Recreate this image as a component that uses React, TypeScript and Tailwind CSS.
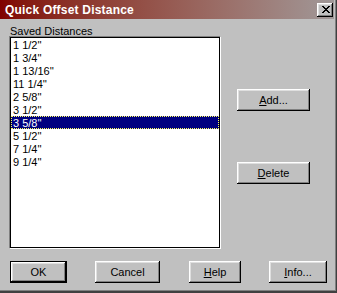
import React from "react";

const items = ["1 1/2''", "1 3/4''", "1 13/16''", "11 1/4''", "2 5/8''", "3 1/2''", "3 5/8''", "5 1/2''", "7 1/4''", "9 1/4''"];

const bevel =
  "shadow-[inset_-1px_-1px_#000000,inset_1px_1px_#ffffff,inset_-2px_-2px_#808080,inset_2px_2px_#dfdfdf]";

function Btn({ w, children, def }: { w: string; children: React.ReactNode; def?: boolean }) {
  if (def) {
    return (
      <div className={`${w} h-[22px] border border-black bg-[#c0c0c0]`}>
        <div className={`w-full h-full ${bevel} flex items-center justify-center text-[11px] leading-[13px] text-black`}>
          {children}
        </div>
      </div>
    );
  }
  return (
    <div className={`${w} h-[22px] bg-[#c0c0c0] ${bevel} flex items-center justify-center text-[11px] leading-[13px] text-black`}>
      {children}
    </div>
  );
}

function CloseGlyph() {
  const rows: [number, number][][] = [
    [[0, 2], [6, 2]],
    [[1, 2], [5, 2]],
    [[2, 4]],
    [[3, 2]],
    [[2, 4]],
    [[1, 2], [5, 2]],
    [[0, 2], [6, 2]],
  ];
  return (
    <svg width="8" height="7" viewBox="0 0 8 7" shapeRendering="crispEdges">
      {rows.map((r, y) =>
        r.map(([x, w], i) => <rect key={`${y}-${i}`} x={x} y={y} width={w} height={1} fill="#000" />)
      )}
    </svg>
  );
}

export default function App() {
  return (
    <div
      className="w-[337px] h-[293px] border-r border-b-2 border-[#404040] bg-[#c0c0c0] overflow-hidden"
      style={{ fontFamily: '"Liberation Sans", Arial, sans-serif' }}
    >
      <div className="w-full h-full shadow-[inset_-1px_-1px_#808080] flex flex-col">
        {/* Title bar */}
        <div className="h-[19px] mr-[2px] bg-gradient-to-r from-[#800000] to-[#a09898] flex items-center justify-between pl-[5px] pr-[1px]">
          <span className="text-white font-bold text-[12px] leading-[14px] tracking-[0.2px]">Quick Offset Distance</span>
          <div className={`w-[16px] h-[14px] bg-[#c0c0c0] ${bevel} flex items-center justify-center pl-[1px]`}>
            <CloseGlyph />
          </div>
        </div>

        <div className="flex flex-row">
          {/* Left column */}
          <div className="pl-[9px] flex flex-col">
            <div className="h-[17px] pt-[7px] pl-[1px] text-[11px] leading-[11px] text-black">Saved Distances</div>
            <div className="w-[212px] h-[213px] border border-t-[#808080] border-l-[#808080] border-r-white border-b-white">
              <div className="w-full h-full border border-black bg-white flex flex-col">
                {items.map((it, i) =>
                  i === 6 ? (
                    <div
                      key={i}
                      className="h-[13px] bg-[#000080] text-white border border-dotted border-[#ffff60] pl-[1px] pt-[1px] text-[11px] leading-[10px] whitespace-pre"
                    >
                      {it}
                    </div>
                  ) : (
                    <div key={i} className="h-[13px] pl-[2px] pt-[1px] text-[11px] leading-[12px] text-black whitespace-pre">
                      {it}
                    </div>
                  )
                )}
              </div>
            </div>
          </div>

          {/* Right column */}
          <div className="ml-[16px] flex flex-col">
            <div className="mt-[70px]">
              <Btn w="w-[73px]">
                <span className="underline">A</span>dd...
              </Btn>
            </div>
            <div className="mt-[51px]">
              <Btn w="w-[73px]">
                <span className="underline">D</span>elete
              </Btn>
            </div>
          </div>
        </div>

        {/* Bottom row */}
        <div className="mt-[12px] pl-[10px] flex flex-row">
          <Btn w="w-[57px]" def>
            OK
          </Btn>
          <div className="ml-[28px]">
            <Btn w="w-[65px]">Cancel</Btn>
          </div>
          <div className="ml-[29px]">
            <Btn w="w-[52px]">
              <span className="underline">H</span>elp
            </Btn>
          </div>
          <div className="ml-[28px]">
            <Btn w="w-[58px]">
              <span className="underline">I</span>nfo...
            </Btn>
          </div>
        </div>
      </div>
    </div>
  );
}
